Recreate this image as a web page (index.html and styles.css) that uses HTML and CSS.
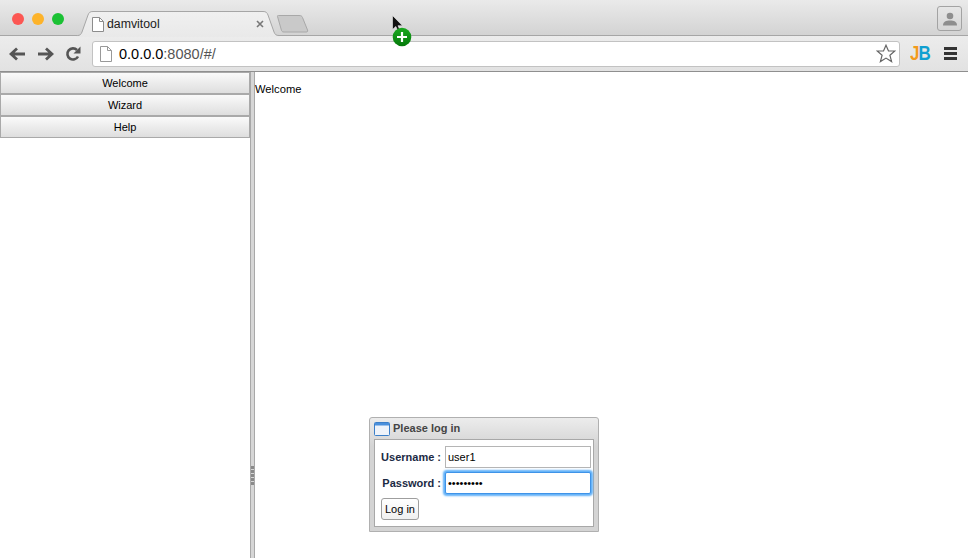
FILE: index.html
```html
<!DOCTYPE html>
<html lang="en">
<head>
    <meta charset="UTF-8">
    <meta name="viewport" content="width=device-width, initial-scale=1.0">
    <title>damvitool</title>
    <link rel="stylesheet" href="styles.css">
</head>
<body>

<header class="browser">
    <div class="tabstrip">
        <div class="lights">
            <span class="light light-red"></span>
            <span class="light light-yellow"></span>
            <span class="light light-green"></span>
        </div>
        <div class="tab">
            <svg class="tab-shape" width="204" height="26" viewBox="0 0 204 26">
                <defs>
                    <linearGradient id="tabfill" x1="0" y1="0" x2="0" y2="1">
                        <stop offset="0" stop-color="#f0f0f0"/>
                        <stop offset="1" stop-color="#e9e9e9"/>
                    </linearGradient>
                </defs>
                <path d="M0 24.5H1.500C4 24.500 5 23.500 6 21L12 4C13 1.500 14 .5 17 .5H187C190 .5 191 1.500 192 4L198 21C199 23.500 200 24.500 203 24.500H204V26H0Z" fill="url(#tabfill)"/>
                <path d="M0 24.5H1.500C4 24.500 5 23.500 6 21L12 4C13 1.500 14 .5 17 .5H187C190 .5 191 1.500 192 4L198 21C199 23.500 200 24.500 203 24.500H204" fill="none" stroke="#a6a6a6"/>
            </svg>
            <svg class="page-icon" width="12" height="15" viewBox="0 0 12 15">
                <path d="M.5.5H7.500L11.500 4.500V14.500H.5Z" fill="#fff" stroke="#8c8c8c"/>
                <path d="M7.500.5V4.500H11.500" fill="none" stroke="#8c8c8c"/>
            </svg>
            <span class="tab-title">damvitool</span>
            <svg class="tab-close" width="8" height="8" viewBox="0 0 8 8">
                <path d="M1 1L7 7M7 1L1 7" stroke="#777" stroke-width="1.600"/>
            </svg>
        </div>
        <svg class="newtab" width="34" height="18" viewBox="0 0 34 18">
            <path d="M1.500 1.500C1.200 .9 1.500 .5 2.500 .5H23C25 .5 26 1 26.500 2.500L31.500 15C32 16.500 31.500 17 30 17H8C6.500 17 6 16.500 5.500 15.500Z" fill="#c9c9c9" stroke="#a8a8a8"/>
        </svg>
        <div class="strip-space"></div>
        <div class="profile">
            <svg width="14" height="14" viewBox="0 0 14 14">
                <circle cx="7" cy="4" r="3.300" fill="#8e8e8e"/>
                <path d="M0 13.500C0 9.500 3 8.500 7 8.500S14 9.500 14 13.500Z" fill="#8e8e8e"/>
            </svg>
        </div>
    </div>
    <div class="toolbar">
        <div class="nav-icons">
            <svg width="17" height="14" viewBox="0 0 17 14">
                <path d="M16 7H3M8 1.500L2 7L8 12.500" fill="none" stroke="#555" stroke-width="2.800"/>
            </svg>
            <svg width="17" height="14" viewBox="0 0 17 14">
                <path d="M1 7H14M9 1.500L15 7L9 12.500" fill="none" stroke="#555" stroke-width="2.800"/>
            </svg>
            <svg width="16" height="16" viewBox="0 0 16 16">
                <path d="M13 10.500A5.600 5.600 0 1 1 12 4" fill="none" stroke="#555" stroke-width="2.600"/>
                <path d="M15.500 .5V7.500H8.500Z" fill="#555"/>
            </svg>
        </div>
        <div class="omnibox">
            <svg class="page-icon" width="12" height="16" viewBox="0 0 12 16">
                <path d="M.5.5H7.500L11.500 4.500V15.500H.5Z" fill="#fff" stroke="#999"/>
                <path d="M7.500.5V4.500H11.500" fill="none" stroke="#999"/>
            </svg>
            <span class="url"><span class="url-host">0.0.0.0</span>:8080/#/</span>
            <svg class="star" width="20" height="19" viewBox="0 0 20 19">
                <path d="M10 1.200L12.500 7H18.800L13.900 11.200L15.600 17.600L10 14.100L4.400 17.600L6.100 11.200L1.200 7H7.500Z" fill="#fff" stroke="#666" stroke-width="1.200"/>
            </svg>
        </div>
        <div class="jb"><span class="jb-j">J</span><span class="jb-b">B</span></div>
        <div class="menu-icon">
            <span></span><span></span><span></span>
        </div>
    </div>
</header>

<div class="app">
    <nav class="sidebar">
        <button class="nav-btn" type="button">Welcome</button>
        <button class="nav-btn" type="button">Wizard</button>
        <button class="nav-btn" type="button">Help</button>
    </nav>
    <div class="splitter">
        <span></span><span></span><span></span><span></span><span></span>
    </div>
    <main class="content">Welcome</main>
</div>

<!-- drag cursor sits over the tab strip -->
<div class="drag-cursor">
    <svg width="11" height="17" viewBox="0 0 11 17">
        <path d="M.5.5V14.500L3.800 11.500L6 16L8 15L6 10.700H10.500Z" fill="#111" stroke="#eee" stroke-width=".6"/>
    </svg>
    <svg class="drag-plus" width="20" height="20" viewBox="0 0 20 20">
        <defs>
            <linearGradient id="plusfill" x1="0" y1="0" x2="0" y2="1">
                <stop offset="0" stop-color="#1aa81f"/>
                <stop offset="1" stop-color="#067a0b"/>
            </linearGradient>
        </defs>
        <circle cx="10" cy="10" r="9.300" fill="url(#plusfill)"/>
        <path d="M10 5V15M5 10H15" stroke="#fff" stroke-width="2.200"/>
    </svg>
</div>

<div class="login">
    <div class="login-title">
        <svg width="16" height="14" viewBox="0 0 16 14">
            <rect x=".5" y=".5" width="15" height="13" rx="1" fill="#eef3fa" stroke="#3b7fc9"/>
            <rect x="1" y="1" width="14" height="2.500" fill="#4a90dc"/>
        </svg>
        <span>Please log in</span>
    </div>
    <div class="login-body">
        <div class="login-row">
            <label for="username">Username :</label>
            <input type="text" id="username" value="user1">
        </div>
        <div class="login-row">
            <label for="password">Password :</label>
            <input type="password" id="password" class="focused" value="password1">
        </div>
        <button class="login-btn" type="button">Log in</button>
    </div>
</div>

</body>
</html>
```

FILE: styles.css
```css
html, body {
    height: 100%;
}
body {
    font-family: "Liberation Sans", Arial, sans-serif;
    margin: 0;
    padding: 0;
    background-color: #fff;
    color: #000;
    display: flex;
    flex-direction: column;
    height: 558px;
    overflow: hidden;
    position: relative;
}

/* browser window */
.browser {
    flex: none;
    height: 72px;
    display: flex;
    flex-direction: column;
    border-bottom: 1px solid #8f8f8f;
    box-sizing: border-box;
}
.tabstrip {
    height: 36px;
    flex: none;
    display: flex;
    align-items: flex-start;
    box-sizing: border-box;
    background: linear-gradient(#eaeaea, #d3d3d3);
    border-bottom: 1px solid #a6a6a6;
    padding-left: 12px;
}
.lights {
    display: flex;
    gap: 8px;
    margin-top: 13px;
    width: 64px;
}
.light {
    width: 12px;
    height: 12px;
    border-radius: 50%;
}
.light-red { background: #fc5753; }
.light-yellow { background: #fdb32a; }
.light-green { background: #1bc134; }
.tab {
    position: relative;
    width: 204px;
    height: 26px;
    margin-top: 11px;
    display: flex;
    align-items: center;
    box-sizing: border-box;
    padding: 0 11px 0 16px;
    z-index: 1;
}
.tab-shape {
    position: absolute;
    left: 0;
    top: 0;
}
.tab .page-icon, .tab-title, .tab-close {
    position: relative;
}
.tab-title {
    font-size: 12.3px;
    margin-left: 3px;
    flex: 1;
    color: #222;
}
.tab-close {
    margin-right: 5px;
}
.newtab {
    margin: 15px 0 0 -4px;
}
.strip-space {
    flex: 1;
}
.profile {
    width: 25px;
    height: 25px;
    margin: 6px 6px 0 0;
    box-sizing: border-box;
    border: 1px solid #a3a3a3;
    border-radius: 3px;
    background: linear-gradient(#e6e6e6, #d6d6d6);
    display: flex;
    align-items: center;
    justify-content: center;
}
.toolbar {
    flex: 1;
    display: flex;
    align-items: center;
    background: linear-gradient(#ececec, #e2e2e2);
    padding-left: 9px;
}
.nav-icons {
    display: flex;
    align-items: center;
    gap: 11px;
    width: 83px;
}
.omnibox {
    width: 808px;
    height: 26px;
    box-sizing: border-box;
    background: #fff;
    border: 1px solid #c2c2c2;
    border-radius: 3px;
    display: flex;
    align-items: center;
    padding: 0 3px 0 7px;
}
.url {
    flex: 1;
    font-size: 14.500px;
    margin-left: 7px;
    color: #555;
}
.url-host {
    color: #000;
}
.jb {
    width: 24px;
    margin-left: 10px;
    font-size: 20px;
    font-weight: bold;
    letter-spacing: -1px;
    transform: scaleX(.85);
    transform-origin: left center;
}
.jb-j { color: #f39b1c; }
.jb-b { color: #0f9fd0; }
.menu-icon {
    margin-left: 10px;
    display: flex;
    flex-direction: column;
    gap: 2px;
}
.menu-icon span {
    display: block;
    width: 13px;
    height: 3px;
    background: #333;
}

/* app */
.app {
    flex: 1;
    display: flex;
    min-height: 0;
}
.sidebar {
    width: 250px;
    flex: none;
    display: flex;
    flex-direction: column;
    border-right: 1px solid #a8a8a8;
}
.nav-btn {
    height: 22px;
    padding: 0;
    border: 1px solid #a9a9a9;
    background: linear-gradient(#fafafa, #dedede);
    font-family: inherit;
    font-size: 11px;
    color: #000;
}
.splitter {
    width: 4px;
    flex: none;
    background: #d6d6d6;
    border-right: 1px solid #a8a8a8;
    display: flex;
    flex-direction: column;
    align-items: center;
    gap: 1px;
    padding-top: 394px;
    box-sizing: border-box;
}
.splitter span {
    width: 3px;
    height: 3px;
    background: #8a8a8a;
}
.content {
    flex: 1;
    font-size: 11.2px;
    padding-top: 10px;
    line-height: 14px;
}

/* login window */
.login {
    position: absolute;
    left: 369px;
    top: 417px;
    width: 230px;
    height: 115px;
    box-sizing: border-box;
    border: 1px solid #b0b0b0;
    border-radius: 3px 3px 0 0;
    background: linear-gradient(#ececec, #d4d4d4 25%, #d4d4d4);
    padding: 0 4px 4px;
    display: flex;
    flex-direction: column;
}
.login-title {
    height: 21px;
    flex: none;
    display: flex;
    align-items: center;
    gap: 3px;
    font-size: 11px;
    line-height: 19px;
    font-weight: bold;
    color: #444;
}
.login-body {
    flex: 1;
    background: #fff;
    border: 1px solid #a8a8a8;
    padding: 6px 2px 0 0;
}
.login-row {
    display: flex;
    align-items: center;
    justify-content: flex-end;
    gap: 4px;
    height: 22px;
    margin-bottom: 4px;
}
.login-row label {
    font-size: 11px;
    font-weight: bold;
    color: #1b2a44;
}
.login-row input {
    width: 146px;
    height: 22px;
    box-sizing: border-box;
    margin: 0;
    padding: 1px 2px;
    border: 1px solid #b5b5b5;
    font-family: inherit;
    font-size: 11px;
    outline: none;
}
.login-row input.focused {
    border: 1px solid #3f93e8;
    box-shadow: 0 0 2px 2px #5fb0f8;
    border-radius: 2px;
}
.login-btn {
    display: block;
    width: 38px;
    height: 22px;
    margin-left: 6px;
    padding: 0;
    border: 1px solid #9e9e9e;
    border-radius: 3px;
    background: linear-gradient(#fff, #f0f0f0);
    font-family: inherit;
    font-size: 11px;
    color: #000;
}

/* drag cursor */
.drag-cursor {
    position: absolute;
    left: 392px;
    top: 15px;
    z-index: 2;
}
.drag-cursor svg {
    display: block;
}
.drag-plus {
    position: absolute;
    left: 0;
    top: 12px;
}
```
